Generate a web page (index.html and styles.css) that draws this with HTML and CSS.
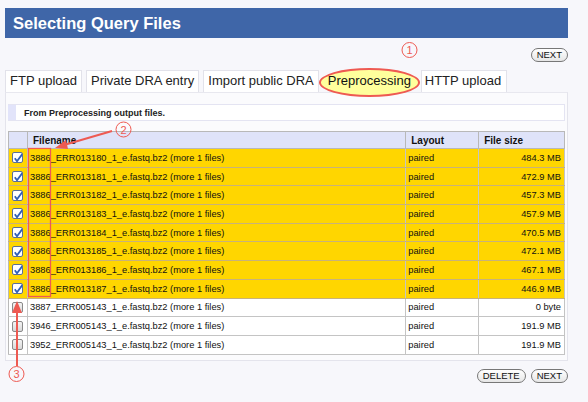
FILE: index.html
```html
<!DOCTYPE html>
<html>
<head>
<meta charset="utf-8">
<link rel="stylesheet" href="styles.css">
</head>
<body>
<div class="page">
  <div class="header"><h1 class="title">Selecting Query Files</h1></div>
  <div class="toolbar"><button class="btn">NEXT</button></div>
  <div class="tabs">
    <div class="tab">FTP upload</div>
    <div class="tab">Private DRA entry</div>
    <div class="tab">Import public DRA</div>
    <div class="tab active">Preprocessing</div>
    <div class="tab after">HTTP upload</div>
  </div>
  <div class="panel">
    <div class="info"><span class="info-mark"></span><span class="info-text">From Preprocessing output files.</span></div>
    <table class="grid">
      <colgroup><col class="c-chk"><col class="c-name"><col class="c-layout"><col class="c-size"></colgroup>
      <thead>
        <tr><th></th><th>Filename</th><th>Layout</th><th>File size</th></tr>
      </thead>
      <tbody>
        <tr class="sel"><td><span class="cb on"></span></td><td>3886_ERR013180_1_e.fastq.bz2 (more 1 files)</td><td>paired</td><td class="num">484.3 MB</td></tr>
        <tr class="sel"><td><span class="cb on"></span></td><td>3886_ERR013181_1_e.fastq.bz2 (more 1 files)</td><td>paired</td><td class="num">472.9 MB</td></tr>
        <tr class="sel"><td><span class="cb on"></span></td><td>3886_ERR013182_1_e.fastq.bz2 (more 1 files)</td><td>paired</td><td class="num">457.3 MB</td></tr>
        <tr class="sel"><td><span class="cb on"></span></td><td>3886_ERR013183_1_e.fastq.bz2 (more 1 files)</td><td>paired</td><td class="num">457.9 MB</td></tr>
        <tr class="sel"><td><span class="cb on"></span></td><td>3886_ERR013184_1_e.fastq.bz2 (more 1 files)</td><td>paired</td><td class="num">470.5 MB</td></tr>
        <tr class="sel"><td><span class="cb on"></span></td><td>3886_ERR013185_1_e.fastq.bz2 (more 1 files)</td><td>paired</td><td class="num">472.1 MB</td></tr>
        <tr class="sel"><td><span class="cb on"></span></td><td>3886_ERR013186_1_e.fastq.bz2 (more 1 files)</td><td>paired</td><td class="num">467.1 MB</td></tr>
        <tr class="sel"><td><span class="cb on"></span></td><td>3886_ERR013187_1_e.fastq.bz2 (more 1 files)</td><td>paired</td><td class="num">446.9 MB</td></tr>
        <tr><td><span class="cb"></span></td><td>3887_ERR005143_1_e.fastq.bz2 (more 1 files)</td><td>paired</td><td class="num">0 byte</td></tr>
        <tr><td><span class="cb"></span></td><td>3946_ERR005143_1_e.fastq.bz2 (more 1 files)</td><td>paired</td><td class="num">191.9 MB</td></tr>
        <tr><td><span class="cb"></span></td><td>3952_ERR005143_1_e.fastq.bz2 (more 1 files)</td><td>paired</td><td class="num">191.9 MB</td></tr>
      </tbody>
    </table>
  </div>
  <div class="actions"><button class="btn">DELETE</button><button class="btn">NEXT</button></div>

  <svg class="annot" width="588" height="402" viewBox="0 0 588 402">
    <circle cx="409.5" cy="50" r="7.5" fill="none" stroke="#ee5a52" stroke-width="1"/>
    <text x="409.5" y="54" text-anchor="middle" class="ann-num">1</text>
    <circle cx="123.5" cy="129.5" r="7.5" fill="none" stroke="#ee5a52" stroke-width="1"/>
    <text x="123.5" y="133.5" text-anchor="middle" class="ann-num">2</text>
    <circle cx="16.5" cy="374" r="7.5" fill="none" stroke="#ee5a52" stroke-width="1"/>
    <text x="16.5" y="378" text-anchor="middle" class="ann-num">3</text>
    <rect x="28.5" y="148.5" width="22" height="148" fill="none" stroke="#ee5a52" stroke-width="1.3"/>
    <line x1="112" y1="131" x2="64" y2="145" stroke="#ee5a52" stroke-width="2"/>
    <polygon points="55,148 66,140 68,149" fill="#ee5a52"/>
    <line x1="17" y1="366" x2="17" y2="312" stroke="#ee5a52" stroke-width="2"/>
    <polygon points="17,301 12,313 22,313" fill="#ee5a52"/>
  </svg>
</div>
</body>
</html>
```
FILE: styles.css
```css
* { box-sizing: border-box; }
html, body { margin: 0; padding: 0; }
body {
  background: #f7f7fb;
  font-family: "Liberation Sans", Arial, sans-serif;
  color: #111;
  width: 588px;
  height: 402px;
  overflow: hidden;
}
.page {
  position: relative;
  width: 588px;
  height: 402px;
  padding: 8px 20px 0 5px;
}
.header {
  height: 30px;
  background: #3f66a8;
  display: flex;
  align-items: center;
  padding-left: 8px;
}
.title {
  margin: 0;
  font-size: 16.5px;
  font-weight: bold;
  color: #fff;
}
.toolbar {
  height: 32px;
  display: flex;
  justify-content: flex-end;
  align-items: center;
  padding-top: 1px;
}
.btn {
  font-family: "Liberation Sans", Arial, sans-serif;
  font-size: 9.5px;
  color: #111;
  background: linear-gradient(#ffffff, #e6e6e6);
  border: 1px solid #777;
  border-radius: 8px;
  height: 14px;
  padding: 0 5px;
  line-height: 12px;
  margin: 0;
}
.tabs {
  display: flex;
  gap: 4px;
  height: 22px;
}
.tab {
  background: #fff;
  border: 1px solid #e2e2ea;
  border-bottom: none;
  font-size: 13px;
  line-height: 20px;
  padding: 0 4px 0 4px;
  color: #222;
}
.tab.active {
  position: relative;
  z-index: 0;
  background: transparent;
  border-color: transparent;
  width: 102px;
  padding: 0 0 0 8px;
  margin-left: -4px;
  color: #111;
}
.tab.active::before {
  content: "";
  position: absolute;
  left: -1px;
  right: 0;
  top: -3px;
  bottom: -5px;
  z-index: -1;
  background: #ffff9c;
  border: 2px solid #ee5a52;
  border-radius: 50%;
}
.tab.after {
  margin-left: -4px;
  padding: 0 5px 0 3px;
}
.panel {
  background: #fbfbfd;
  border: 1px solid #e4e4ec;
  border-top: 1px solid #e8e8ef;
  height: 269px;
  padding: 11px 2px 0 2px;
}
.info {
  display: flex;
  align-items: center;
  height: 17px;
  background: #fff;
  border: 1px solid #e4e4f2;
  border-left: none;
}
.info-mark {
  width: 8px;
  align-self: stretch;
  background: #e2e4fa;
  margin-right: 8px;
}
.info-text {
  font-size: 9px;
  font-weight: bold;
  color: #222;
}
.grid {
  margin-top: 10px;
  width: 557px;
  border-collapse: collapse;
  border: 1px solid #b8b8b8;
  font-size: 9.3px;
}
.c-chk { width: 19px; }
.c-name { width: 379px; }
.c-layout { width: 73px; }
.c-size { width: 86px; }
.grid th {
  background: #dfe3f9;
  text-align: left;
  font-weight: bold;
  font-size: 10px;
  height: 17px;
  padding: 0 5px;
  border: 1px solid #b8b8b8;
  color: #111;
}
.grid td {
  height: 18.7px;
  padding: 0 2px;
  border: 1px solid #c4c4c4;
  border-left: 1px solid #b8b8b8;
  background: #fff;
  color: #111;
  white-space: nowrap;
}
.grid tr.sel td { background: #ffd600; border-bottom-color: #c8b27a; }
.grid td:first-child { padding: 0 0 0 3px; }
.grid td.num { text-align: right; padding-right: 3px; }
.cb {
  display: block;
  width: 11px;
  height: 11px;
  border: 1px solid #8a8a8a;
  border-radius: 2px;
  background: linear-gradient(#f4f4f4, #d8d8d8);
}
.cb.on {
  border-color: #5a6f99;
  background: #fff url("data:image/svg+xml;utf8,<svg xmlns='http://www.w3.org/2000/svg' width='11' height='11' viewBox='0 0 11 11'><path d='M1.8 5.2 L4 8.3 L9.5 0.8' fill='none' stroke='%232f5fb8' stroke-width='1.8'/></svg>") no-repeat 0 0;
}
.actions {
  display: flex;
  justify-content: flex-end;
  gap: 5px;
  padding-top: 8px;
}
.annot {
  position: absolute;
  left: 0;
  top: 0;
  pointer-events: none;
}
.ann-num {
  font-family: "Liberation Sans", Arial, sans-serif;
  font-size: 11px;
  fill: #ee5a52;
}
```
